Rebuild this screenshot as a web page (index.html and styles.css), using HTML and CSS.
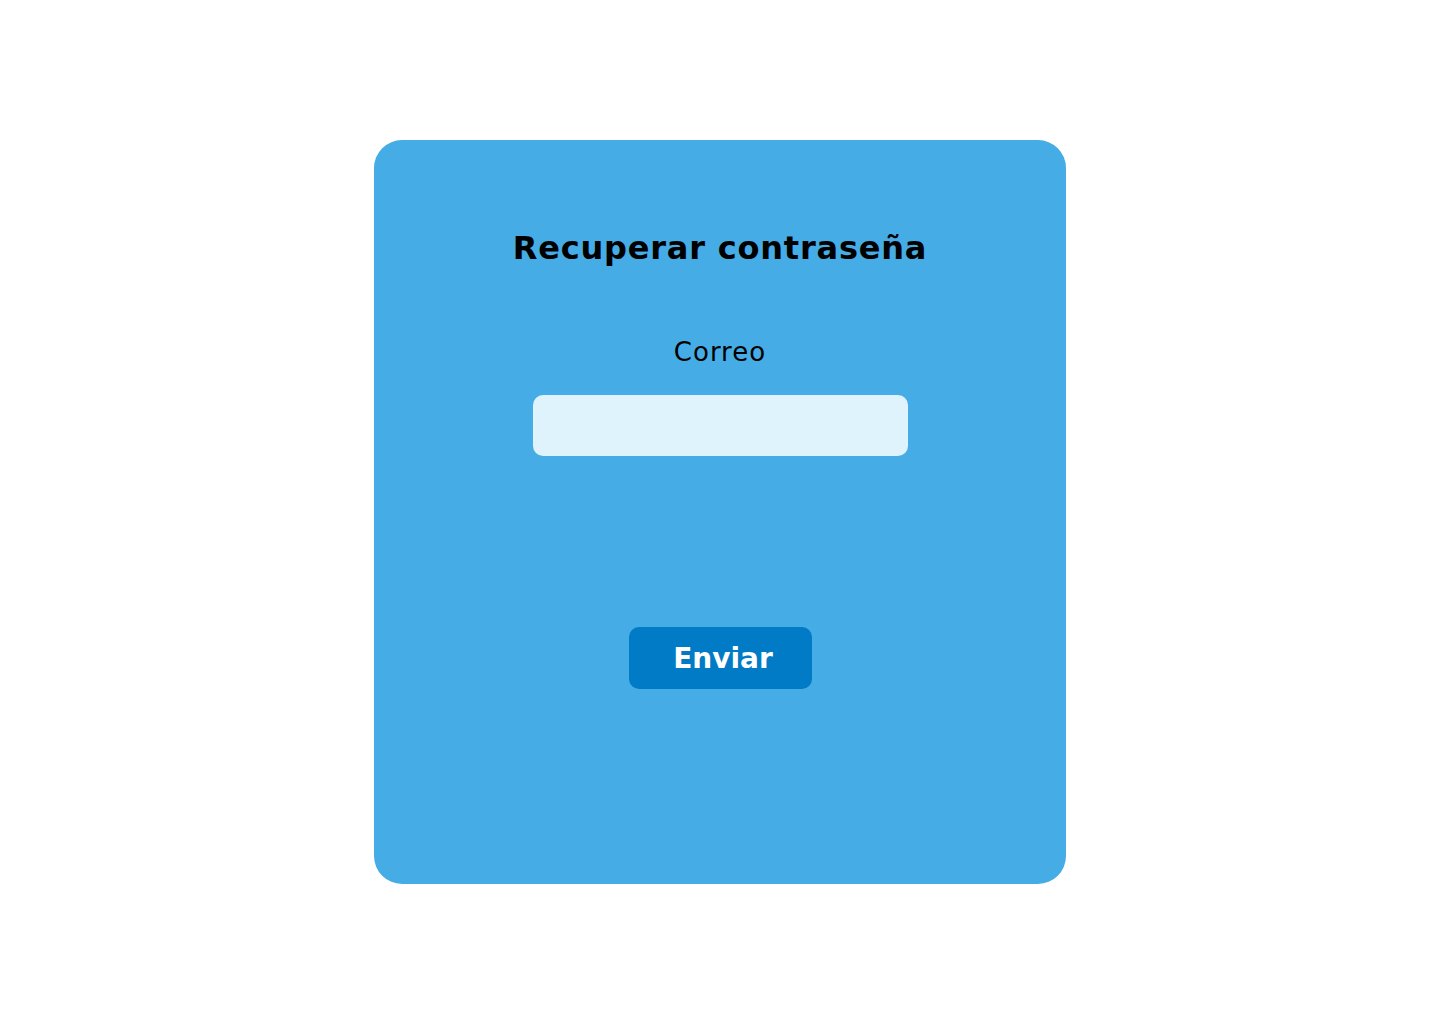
FILE: index.html
```html
<!DOCTYPE html>
<html lang="es">
<head>
<meta charset="utf-8">
<title>Recuperar contraseña</title>
<link rel="stylesheet" href="styles.css">
</head>
<body>
<main class="page">
  <form class="card">
    <h1 class="title">Recuperar contraseña</h1>
    <label class="label" for="correo">Correo</label>
    <input class="field" id="correo" type="email">
    <button class="btn" type="button">Enviar</button>
  </form>
</main>
</body>
</html>
```
FILE: styles.css
```css
* { box-sizing: border-box; }
html, body { margin: 0; padding: 0; background: #ffffff; }
body { font-family: "DejaVu Sans", "Verdana", sans-serif; color: #000; }
.page {
  min-height: 1024px;
  display: flex;
  align-items: center;
  justify-content: center;
}
.card {
  width: 692px;
  height: 744px;
  background: #45ACE6;
  border-radius: 28px;
  display: flex;
  flex-direction: column;
  align-items: center;
  padding-top: 88px;
}
.title {
  margin: 0;
  font-size: 32px;
  line-height: 40px;
  font-weight: 700;
  letter-spacing: 0.8px;
}
.label {
  margin-top: 69px;
  font-size: 26px;
  line-height: 30px;
  letter-spacing: 1px;
}
.field {
  margin-top: 28px;
  width: 375px;
  height: 61px;
  border: none;
  border-radius: 10px;
  background: #DFF3FD;
  outline: none;
  font: inherit;
  padding: 0 16px;
}
.btn {
  margin-top: 171px;
  width: 183px;
  height: 62px;
  border: none;
  border-radius: 10px;
  background: #017BC5;
  color: #ffffff;
  font-family: inherit;
  font-size: 28px;
  font-weight: 700;
  padding: 0 0 0 6px;
  cursor: pointer;
}
```
